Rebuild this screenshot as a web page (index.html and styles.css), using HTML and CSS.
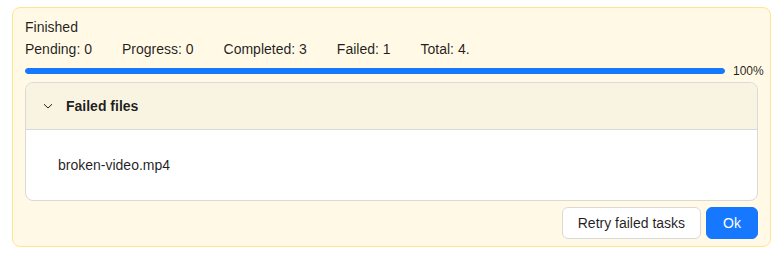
FILE: index.html
```html
<!DOCTYPE html>
<html lang="en">
<head>
    <meta charset="UTF-8">
    <title>Upload Status</title>
    <link rel="stylesheet" href="styles.css">
</head>
<body>
    <div class="status-box">
        <div class="status-title">Finished</div>
        <div class="status-stats">
            <span>Pending: 0</span>
            <span>Progress: 0</span>
            <span>Completed: 3</span>
            <span>Failed: 1</span>
            <span>Total: 4.</span>
        </div>
        <div class="progress">
            <div class="progress-track"><div class="progress-bar" style="width: 100%"></div></div>
            <span class="progress-text">100%</span>
        </div>
        <div class="collapse">
            <div class="collapse-header">
                <svg class="chevron" width="12" height="12" viewBox="0 0 12 12">
                    <path d="M2 4.2 L6 8 L10 4.2" fill="none" stroke="#222" stroke-width="1"/>
                </svg>
                <span>Failed files</span>
            </div>
            <div class="collapse-body">broken-video.mp4</div>
        </div>
        <div class="actions">
            <button class="btn">Retry failed tasks</button>
            <button class="btn btn-primary">Ok</button>
        </div>
    </div>
</body>
</html>
```

FILE: styles.css
```css
body {
    margin: 0;
    padding: 7px 10px 7px 12px;
    font-family: "Liberation Sans", Arial, sans-serif;
    font-size: 14px;
    color: rgba(0, 0, 0, 0.88);
    background: #ffffff;
}

.status-box {
    background: #fff9e6;
    border: 1px solid #ffe58f;
    border-radius: 8px;
    padding: 8px 12px 7px 12px;
}

.status-title {
    line-height: 22px;
}

.status-stats {
    display: flex;
    gap: 30px;
    line-height: 22px;
}

.progress {
    display: flex;
    align-items: center;
    height: 22px;
    margin-right: -8px;
}

.progress-track {
    width: calc(100% - 41px);
    height: 6px;
    background: rgba(0, 0, 0, 0.06);
    border-radius: 3px;
    overflow: hidden;
}

.progress-bar {
    height: 100%;
    background: #1677ff;
    border-radius: 3px;
}

.progress-text {
    margin-left: 8px;
    font-size: 12px;
    white-space: nowrap;
    line-height: 1;
}

.collapse {
    border: 1px solid #d9d9d9;
    border-radius: 8px;
    overflow: hidden;
    background: #ffffff;
}

.collapse-header {
    display: flex;
    align-items: center;
    gap: 12px;
    height: 46px;
    padding: 0 16px;
    background: #f9f4e1;
    border-bottom: 1px solid #d9d9d9;
    font-weight: bold;
}

.chevron {
    flex: none;
}

.collapse-body {
    padding: 24px 32px;
    line-height: 22px;
}

.actions {
    display: flex;
    justify-content: flex-end;
    gap: 5px;
    margin-top: 6px;
}

.btn {
    font-family: inherit;
    font-size: 14px;
    height: 32px;
    padding: 0 15px;
    border-radius: 6px;
    border: 1px solid #d9d9d9;
    background: #ffffff;
    color: rgba(0, 0, 0, 0.88);
    cursor: pointer;
}

.btn-primary {
    padding: 0 16px;
    background: #1677ff;
    border-color: #1677ff;
    color: #ffffff;
}
```
